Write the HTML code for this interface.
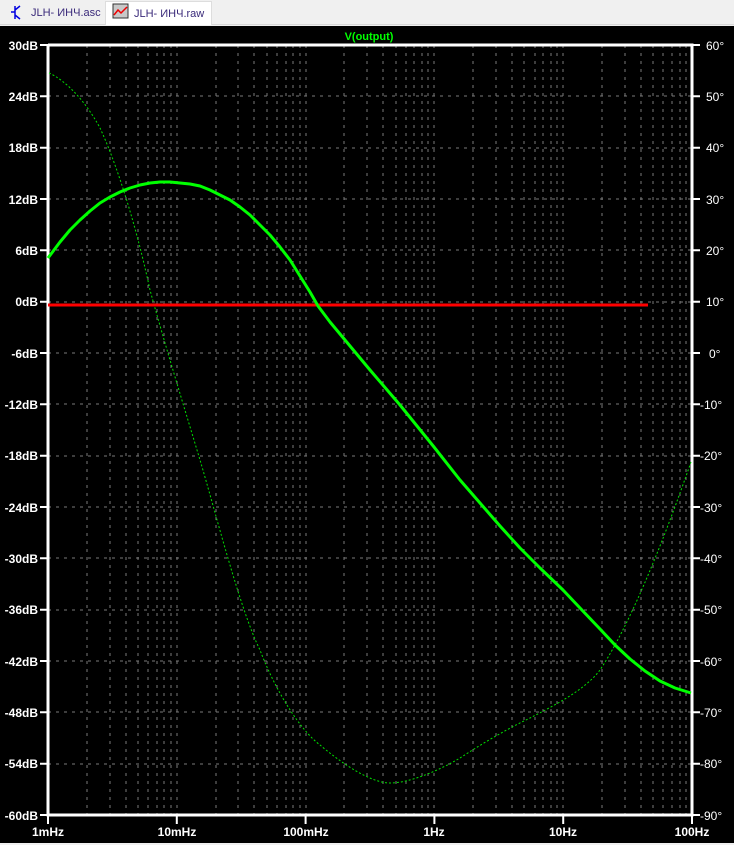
<!DOCTYPE html>
<html><head><meta charset="utf-8"><style>
html,body{margin:0;padding:0;width:734px;height:845px;overflow:hidden;background:#f0f0f0;font-family:"Liberation Sans","Noto Sans CJK SC",sans-serif}
.tabs{position:absolute;left:0;top:0;width:734px;height:24px;background:#f0f0f0;border-bottom:1px solid #d8d8d8}
.tab{position:absolute;top:3px;height:20px;font-size:11px;color:#3a2a7a;line-height:20px;white-space:nowrap}
.tab span{white-space:nowrap}
svg{position:absolute;left:0;top:0}
</style></head><body>
<div class="tabs">
<div class="tab" style="left:0;width:104px;"><span style="position:absolute;left:31px;">JLH- ИНЧ.asc</span></div>
<div class="tab" style="left:105px;width:105px;top:1px;height:23px;background:#fff;border:1px solid #ddd;border-bottom:none;"><span style="position:absolute;left:28px;top:2px;">JLH- ИНЧ.raw</span></div>
</div>
<svg width="734" height="845" viewBox="0 0 734 845">
<g stroke="#0000e0" stroke-width="1.5" fill="none"><path d="M15 6V19M15 12H11M15 10L20 6M15 15L20 19"/></g>
<rect x="113" y="4" width="15" height="14" fill="#c8c8c8" stroke="#333" stroke-width="1"/>
<path d="M114 15L118 10L121 13L127 7" stroke="#e00" stroke-width="1.5" fill="none"/>
<rect x="0" y="26" width="734" height="817" fill="#000"/>
<text x="369" y="40" fill="#00ff00" font-size="11" font-weight="bold" text-anchor="middle">V(output)</text>
<g stroke="#7a7a7a" stroke-width="1" stroke-dasharray="3,5" fill="none" shape-rendering="crispEdges">
<path d="M87 45V815M110 45V815M126 45V815M138 45V815M148 45V815M157 45V815M164 45V815M171 45V815M177 45V815
M216 45V815M238 45V815M254 45V815M267 45V815M277 45V815M286 45V815M293 45V815M300 45V815M306 45V815
M344 45V815M367 45V815M383 45V815M396 45V815M406 45V815M414 45V815M422 45V815M428 45V815M434 45V815
M473 45V815M496 45V815M512 45V815M524 45V815M535 45V815M543 45V815M551 45V815M557 45V815M563 45V815
M602 45V815M625 45V815M641 45V815M653 45V815M663 45V815M672 45V815M680 45V815M686 45V815"/>
<path d="M48 96H692M48 148H692M48 199H692M48 250H692M48 302H692M48 353H692M48 404H692M48 456H692M48 507H692M48 558H692M48 610H692M48 661H692M48 712H692M48 764H692"/>
</g>
<g stroke="#fff" stroke-width="3" fill="none">
<path d="M48 45V815H692V45H48"/>
</g>
<g stroke="#fff" stroke-width="2">
<path d="M40 45H48M40 96.3H48M40 147.7H48M40 199H48M40 250.3H48M40 301.7H48M40 353H48M40 404.3H48M40 455.7H48M40 507H48M40 558.3H48M40 609.7H48M40 661H48M40 712.3H48M40 763.7H48M40 815H48"/>
<path d="M692 45H700M692 96.3H700M692 147.7H700M692 199H700M692 250.3H700M692 301.7H700M692 353H700M692 404.3H700M692 455.7H700M692 507H700M692 558.3H700M692 609.7H700M692 661H700M692 712.3H700M692 763.7H700M692 815H700"/>
<path d="M48 815V824M176.8 815V824M305.6 815V824M434.4 815V824M563.2 815V824M692 815V824"/>
</g>
<g fill="#fff" font-size="12" font-weight="bold" text-anchor="end">
<text x="38" y="50">30dB</text><text x="38" y="101">24dB</text><text x="38" y="152">18dB</text><text x="38" y="204">12dB</text><text x="38" y="255">6dB</text><text x="38" y="306">0dB</text><text x="38" y="358">-6dB</text><text x="38" y="409">-12dB</text><text x="38" y="460">-18dB</text><text x="38" y="512">-24dB</text><text x="38" y="563">-30dB</text><text x="38" y="614">-36dB</text><text x="38" y="666">-42dB</text><text x="38" y="717">-48dB</text><text x="38" y="768">-54dB</text><text x="38" y="820">-60dB</text>
</g>
<g fill="#fff" font-size="12" text-anchor="start">
<text x="706" y="50">60°</text><text x="706" y="101">50°</text><text x="706" y="152">40°</text><text x="706" y="204">30°</text><text x="706" y="255">20°</text><text x="706" y="306">10°</text><text x="709" y="358">0°</text><text x="700" y="409">-10°</text><text x="700" y="460">-20°</text><text x="700" y="512">-30°</text><text x="700" y="563">-40°</text><text x="700" y="614">-50°</text><text x="700" y="666">-60°</text><text x="700" y="717">-70°</text><text x="700" y="768">-80°</text><text x="700" y="820">-90°</text>
</g>
<g fill="#fff" font-size="12" font-weight="bold" text-anchor="middle">
<text x="48" y="836">1mHz</text><text x="177" y="836">10mHz</text><text x="306" y="836">100mHz</text><text x="434" y="836">1Hz</text><text x="563" y="836">10Hz</text><text x="692" y="836">100Hz</text>
</g>
<path d="M49 73C65 80 85 100 100 128C115 160 135 220 150 290C165 345 185 410 200 460C215 510 240 610 260 650C275 690 300 730 320 745C340 762 370 783 390 783C410 783 440 770 460 758C480 745 505 730 530 718C555 705 585 690 600 670C620 640 650 580 691 462" stroke="#00e000" stroke-width="1" stroke-dasharray="2,2" fill="none"/>
<path d="M48 305H648" stroke="#ff0000" stroke-width="3"/>
<polyline points="48,258 60,242 70,230 80,220 90,211 100,203 110,197 120,192 130,188 140,185 150,183 160,182 170,182 180,183 190,184 200,186 210,190 220,195 230,200 240,207 250,215 260,225 270,235 280,247 290,260 300,276 310,292 318,306 330,322 350,346 370,370 400,405 434,447 460,480 480,503 500,526 520,548 540,568 563,590 580,608 600,629 615,645 630,659 645,671 660,681 675,688 691,693" stroke="#00ff00" stroke-width="3" fill="none" stroke-linejoin="round"/>
</svg>
</body></html>
